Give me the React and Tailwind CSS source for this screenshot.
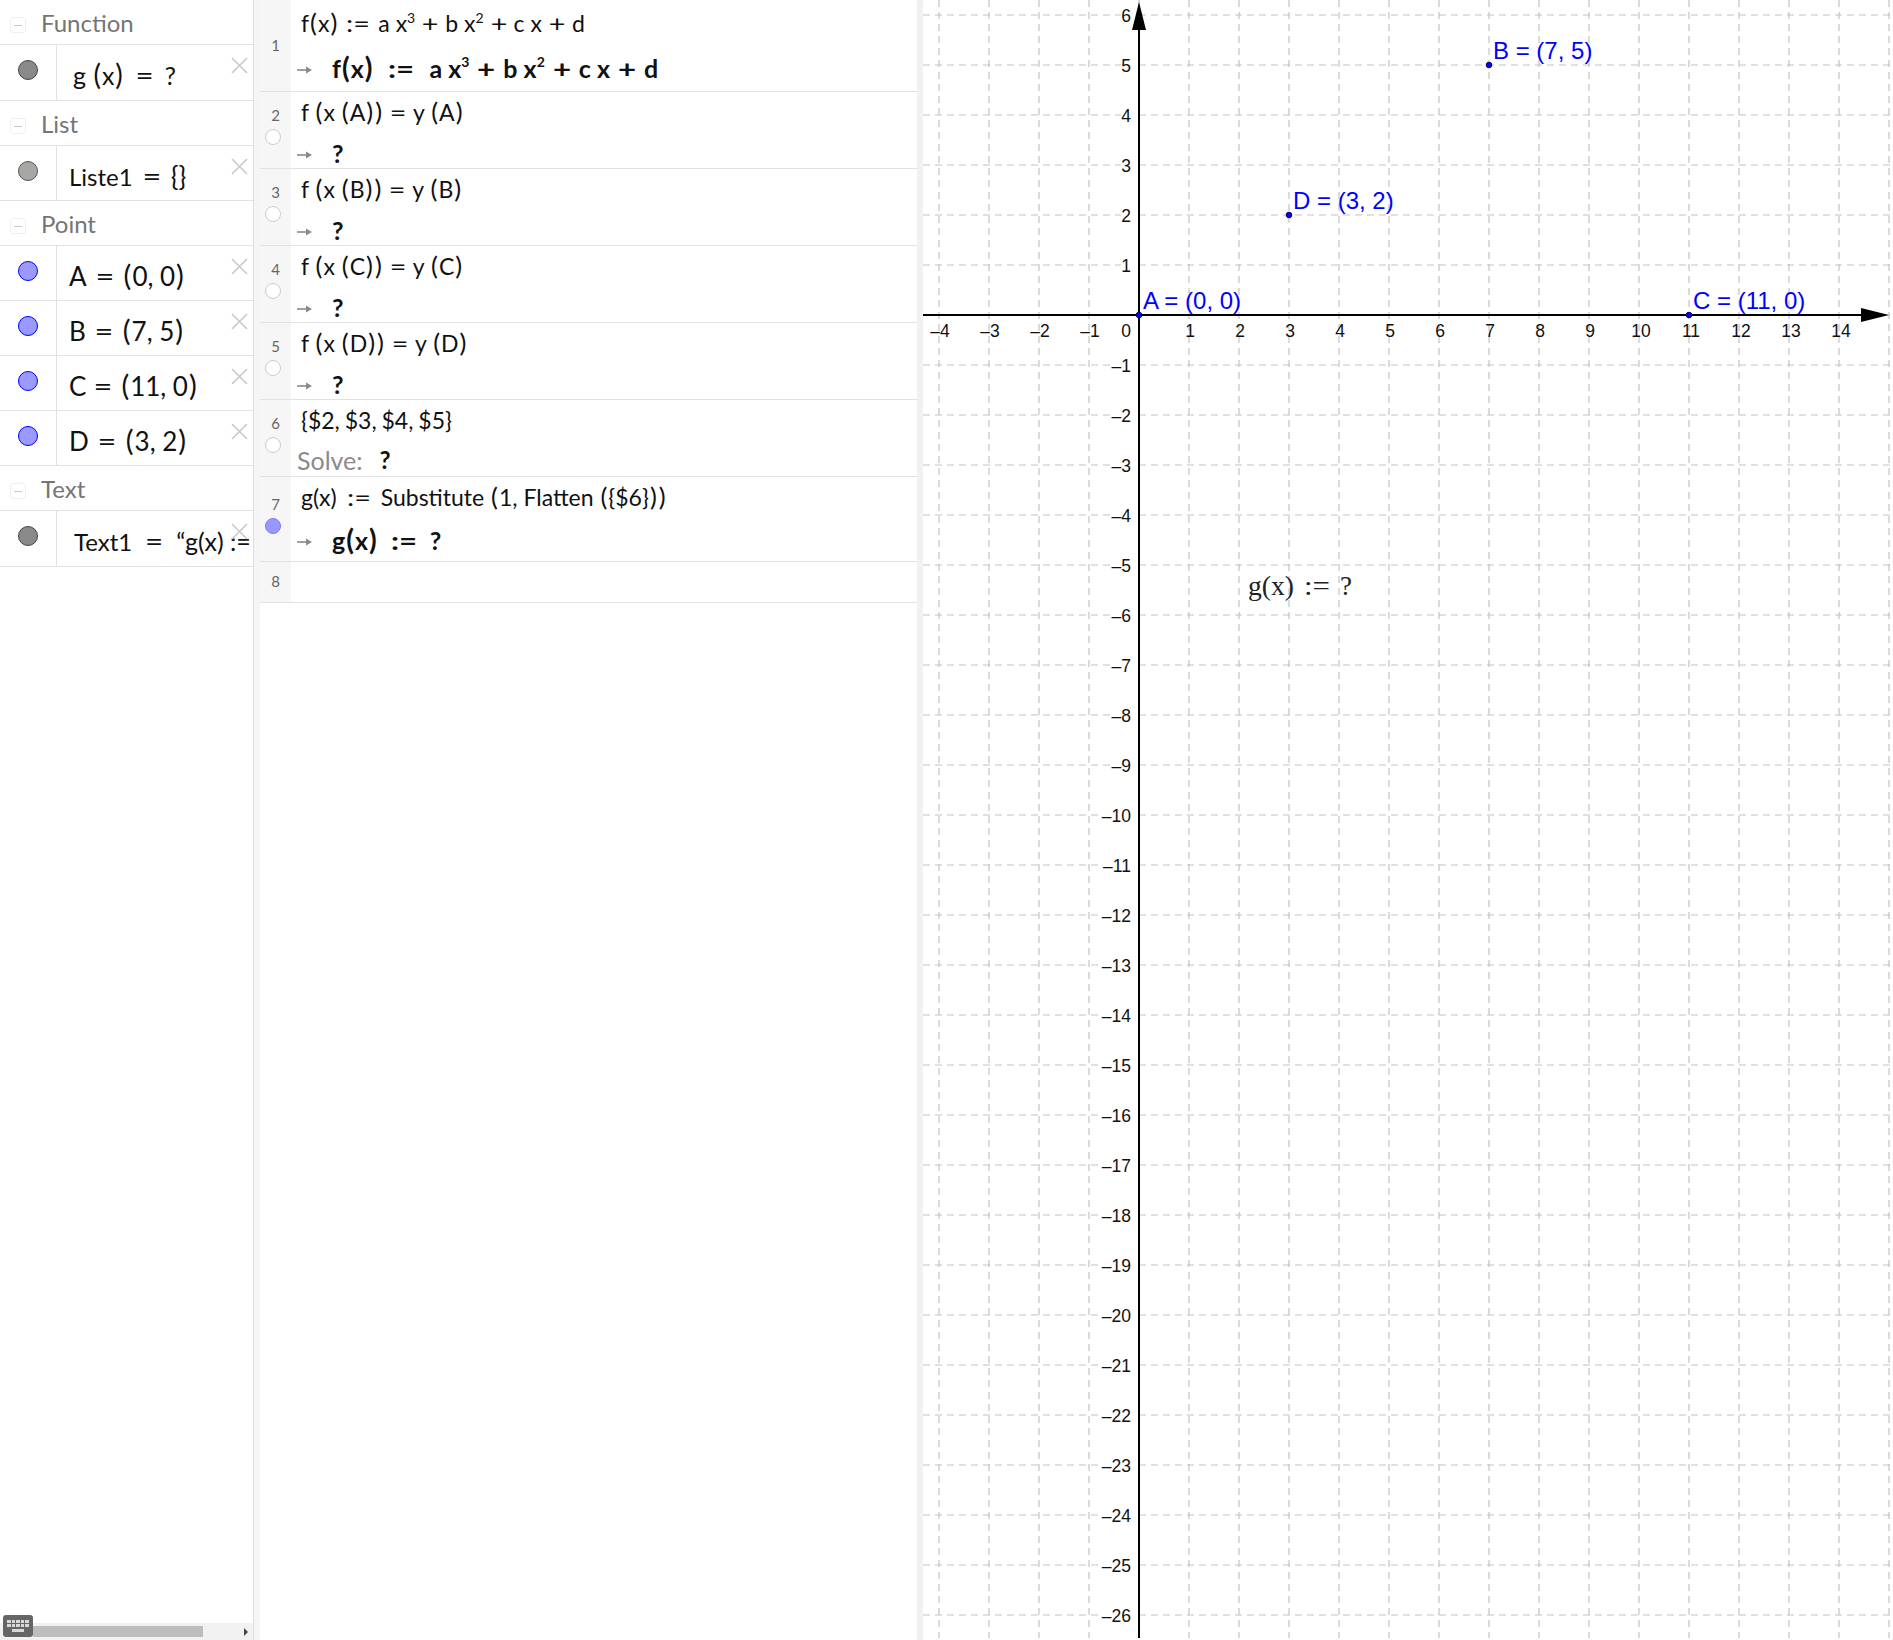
const OX = 216;
const OY = 315;
const UNIT = 50;

function range(a, b) {
  const out = [];
  for (let i = a; i <= b; i++) out.push(i);
  return out;
}

function Toggle() {
  return (
    <span className="w-4 h-4 mr-[15px] ml-[10px] mt-[6px] rounded-[3px] border border-[#efefef] flex items-center justify-center">
      <span className="w-[8px] h-px bg-[#c8c8c8]"></span>
    </span>
  );
}

function Dot({ color }) {
  const colors = {
    gray: 'bg-[#8a8a8a] border-[#444444]',
    list: 'bg-[#a5a8a3] border-[#555555]',
    blue: 'bg-[#9999ff] border-[#0000ff]',
  };
  return <span className={`block w-5 h-5 rounded-full border ${colors[color]}`}></span>;
}

function Header({ label }) {
  return (
    <div className="h-[45px] flex items-center border-b border-[#e2e2e2] text-[24px] text-[#757575]">
      <Toggle />
      <span className="mt-[2px]">{label}</span>
    </div>
  );
}

function Row({ color, children, tall, pl }) {
  return (
    <div className={`relative flex overflow-hidden border-b border-[#e2e2e2] ${tall ? 'h-[56px]' : 'h-[55px]'}`}>
      <div className="w-[57px] shrink-0 border-r border-[#e2e2e2] pl-[18px] pt-[15px]">
        <Dot color={color} />
      </div>
      <div className={`whitespace-nowrap pt-[11px] text-[26px] leading-[38px] text-[#111111] ${pl}`}>{children}</div>
      <svg className="absolute left-[231px] top-[12px]" width="17" height="17" viewBox="0 0 17 17">
        <path d="M1 1 L16 16 M16 1 L1 16" stroke="#c9c9c9" strokeWidth="1.6" fill="none" />
      </svg>
    </div>
  );
}

// wide operator, stretched to the look of the math font
function Op({ w = 'w-[30px]', children }) {
  return <span className={`inline-block text-center scale-x-125 ${w}`}>{children}</span>;
}

function P({ children }) {
  return <span className="mx-px text-[1.12em] leading-none">{children}</span>;
}

function AlgebraPanel() {
  return (
    <div className="relative w-[253px] h-[1640px] shrink-0 flex flex-col font-['Lato',sans-serif]">
      <Header label="Function" />
      <Row color="gray" tall pl="pl-[16px]"><span className="text-[25px]">g <P>(</P>x<P>)</P><Op w="w-[41px]">=</Op>?</span></Row>
      <Header label="List" />
      <Row color="list" pl="pl-[12px]"><span className="text-[24px]">Liste1</span><Op w="w-[38px]">=</Op>{'{}'}</Row>
      <Header label="Point" />
      <Row color="blue" pl="pl-[12px]">A<Op w="w-[36px]">=</Op><P>(</P>0, 0<P>)</P></Row>
      <Row color="blue" pl="pl-[12px]">B<Op w="w-[36px]">=</Op><P>(</P>7, 5<P>)</P></Row>
      <Row color="blue" pl="pl-[12px]">C<Op w="w-[34px]">=</Op><P>(</P>11, 0<P>)</P></Row>
      <Row color="blue" pl="pl-[12px]">D<Op w="w-[36px]">=</Op><P>(</P>3, 2<P>)</P></Row>
      <Header label="Text" />
      <Row color="gray" tall pl="pl-[17px]"><span className="text-[25px]"><span className="text-[24px]">Text1</span><Op w="w-[44px]">=</Op>“g(x) := ?”</span></Row>
      <div className="flex-1"></div>
      <div className="h-[17px] bg-[#f2f2f2] flex items-center pl-[33px] pr-[5px]">
        <div className="w-[170px] h-[11px] bg-[#bdbdbd]"></div>
        <div className="flex-1"></div>
        <span className="w-0 h-0 border-y-[4px] border-y-transparent border-l-[4px] border-l-[#444444]"></span>
      </div>
      <div className="absolute left-[3px] top-[1615px] w-[30px] h-[22px] rounded-[3px] bg-[#666666] px-[4px] pt-[5px] flex flex-col gap-[2px]">
        <div className="grid grid-cols-5 gap-[1px]">
          {range(1, 10).map(i => <span key={i} className="h-[3px] bg-[#d8d8d8]"></span>)}
        </div>
        <span className="ml-[5px] w-[12px] h-[3px] bg-[#d8d8d8]"></span>
      </div>
    </div>
  );
}

function Arrow() {
  return (
    <svg className="shrink-0 mt-[3px]" width="16" height="10" viewBox="0 0 16 10">
      <path d="M0 5 H10" stroke="#8a8a8a" strokeWidth="1.6" />
      <path d="M9 1.5 L15 5 L9 8.5 Z" fill="#8a8a8a" />
    </svg>
  );
}

function CasRow({ n, h, dot, numTop, dotTop, children }) {
  return (
    <div className={`flex border-b border-[#e2e2e2] ${h}`}>
      <div className={`relative w-[31px] shrink-0 bg-[#f6f6f6] text-center text-[15px] leading-[18px] text-[#666666] ${numTop}`}>
        <div>{n}</div>
        {dot && (
          <span className={`absolute left-[5px] ${dotTop} block w-4 h-4 rounded-full border ${dot === 'on' ? 'bg-[#9999ff] border-[#7a7aff]' : 'bg-white border-[#cccccc]'}`}></span>
        )}
      </div>
      <div className="flex-1 flex flex-col whitespace-nowrap pl-[6px] text-[#111111]">{children}</div>
    </div>
  );
}

function Input({ pt, children }) {
  return <div className={`pl-[4px] text-[23px] leading-[30px] ${pt}`}>{children}</div>;
}

function Output({ pt, children }) {
  return (
    <div className={`flex items-center text-[25px] leading-[30px] font-bold ${pt}`}>
      <Arrow />
      <span className="ml-[19px]">{children}</span>
    </div>
  );
}

function Sup({ bold, children }) {
  return <sup className={`text-[14px] ${bold ? 'top-[-11px]' : 'top-[-9px]'}`}>{children}</sup>;
}

function Poly({ bold }) {
  const w = bold ? 'w-[34px]' : 'w-[30px]';
  return (
    <>
      a x<Sup bold={bold}>3</Sup><Op w={w}>+</Op>b x<Sup bold={bold}>2</Sup><Op w={w}>+</Op>c x<Op w={w}>+</Op>d
    </>
  );
}

function CasPanel() {
  const eqs = ['A', 'B', 'C', 'D'];
  return (
    <div className="w-[657px] shrink-0 font-['Lato',sans-serif]">
      <CasRow n="1" h="h-[92px]" numTop="pt-[36px]">
        <Input pt="pt-[8px]">f<P>(</P>x<P>)</P><Op w="w-[40px]">:=</Op><Poly /></Input>
        <Output pt="pt-[15px]">f<P>(</P>x<P>)</P><Op w="w-[56px]">:=</Op><Poly bold /></Output>
      </CasRow>
      {eqs.map((p, i) => (
        <CasRow key={p} n={i + 2} h="h-[77px]" numTop="pt-[14px]" dot="off" dotTop="top-[37px]">
          <Input pt="pt-[5px]">f <P>(</P>x <P>(</P>{p}<P>)</P><P>)</P><Op>=</Op>y <P>(</P>{p}<P>)</P></Input>
          <Output pt="pt-[11px]">?</Output>
        </CasRow>
      ))}
      <CasRow n="6" h="h-[77px]" numTop="pt-[14px]" dot="off" dotTop="top-[37px]">
        <Input pt="pt-[5px]"><span className="[word-spacing:-1px]">{'{$2, $3, $4, $5}'}</span></Input>
        <div className="flex items-center pt-[10px] text-[24px] leading-[30px]">
          <span className="text-[#8a8a8a] text-[25px]">Solve:</span>
          <span className="ml-[17px] font-bold">?</span>
        </div>
      </CasRow>
      <CasRow n="7" h="h-[85px]" numTop="pt-[18px]" dot="on" dotTop="top-[41px]">
        <Input pt="pt-[5px]">g(x)<Op w="w-[44px]">:=</Op>Substitute <P>(</P>1, Flatten <P>(</P>{'{$6}'}<P>)</P><P>)</P></Input>
        <Output pt="pt-[13px]">g<P>(</P>x<P>)</P><Op w="w-[52px]">:=</Op>?</Output>
      </CasRow>
      <CasRow n="8" h="h-[41px]" numTop="pt-[10px]"></CasRow>
    </div>
  );
}

function Graph() {
  const xs = range(-4, 15);
  const ys = range(-26, 6);
  const points = [
    { x: 0, y: 0, label: 'A = (0, 0)' },
    { x: 7, y: 5, label: 'B = (7, 5)' },
    { x: 11, y: 0, label: 'C = (11, 0)' },
    { x: 3, y: 2, label: 'D = (3, 2)' },
  ];
  return (
    <svg width="970" height="1638" viewBox="0 0 970 1638" className="block font-['Liberation_Sans',sans-serif]">
      {xs.map(v => (
        <line key={v} x1={OX + v * UNIT} x2={OX + v * UNIT} y1="0" y2="1638" stroke="#c4c4c4" strokeWidth="1.2" strokeDasharray="7 5" />
      ))}
      {ys.map(v => (
        <line key={v} x1="0" x2="970" y1={OY - v * UNIT} y2={OY - v * UNIT} stroke="#c4c4c4" strokeWidth="1.2" strokeDasharray="7 5" />
      ))}
      {ys.filter(v => v !== 0).map(v => (
        <rect key={v} x={v < 0 ? OX - (v <= -10 ? 36 : 28) : OX - 18} y={OY - v * UNIT - 3} width={v < 0 ? (v <= -10 ? 36 : 28) : 18} height="6" fill="white" />
      ))}
      <line x1="0" x2="945" y1={OY} y2={OY} stroke="black" strokeWidth="2" />
      <line x1={OX} x2={OX} y1="25" y2="1638" stroke="black" strokeWidth="2" />
      <path d={`M${OX} 2 L${OX + 7} 30 L${OX - 7} 30 Z`} fill="black" />
      <path d={`M966 ${OY} L938 ${OY - 7} L938 ${OY + 7} Z`} fill="black" />
      <g fontSize="17.5" fill="#111111">
        {xs.filter(v => v !== 0 && v !== 15).map(v => (
          <text key={v} x={OX + v * UNIT + (v >= 10 ? 2 : 1)} y={OY + 22} textAnchor="middle">{v < 0 ? `–${-v}` : v}</text>
        ))}
        <text x={OX - 8} y={OY + 22} textAnchor="end">0</text>
        {ys.filter(v => v !== 0).map(v => (
          <text key={v} x={OX - 8} y={OY - v * UNIT + 7} textAnchor="end">{v < 0 ? `–${-v}` : v}</text>
        ))}
      </g>
      {points.map(p => (
        <g key={p.label}>
          <circle cx={OX + p.x * UNIT} cy={OY - p.y * UNIT} r="2.8" fill="#0000ff" stroke="#00006e" strokeWidth="1" />
          <text x={OX + p.x * UNIT + 4} y={OY - p.y * UNIT - 6} fontSize="24" fill="#0000ff">{p.label}</text>
        </g>
      ))}
      <g fontSize="27" fill="#222222" className="font-['Liberation_Serif',serif]">
        <text x="325" y="595" textLength="46" lengthAdjust="spacingAndGlyphs">g(x)</text>
        <text x="381" y="595" textLength="26" lengthAdjust="spacingAndGlyphs">:=</text>
        <text x="417" y="595">?</text>
      </g>
    </svg>
  );
}

export default function App() {
  return (
    <div className="flex w-[1893px] h-[1640px] overflow-hidden bg-white">
      <AlgebraPanel />
      <div className="w-[7px] shrink-0 bg-[#f5f5f5] border-l border-[#dedede]"></div>
      <CasPanel />
      <div className="w-[6px] shrink-0 bg-[#f1f1f1]"></div>
      <Graph />
    </div>
  );
}
